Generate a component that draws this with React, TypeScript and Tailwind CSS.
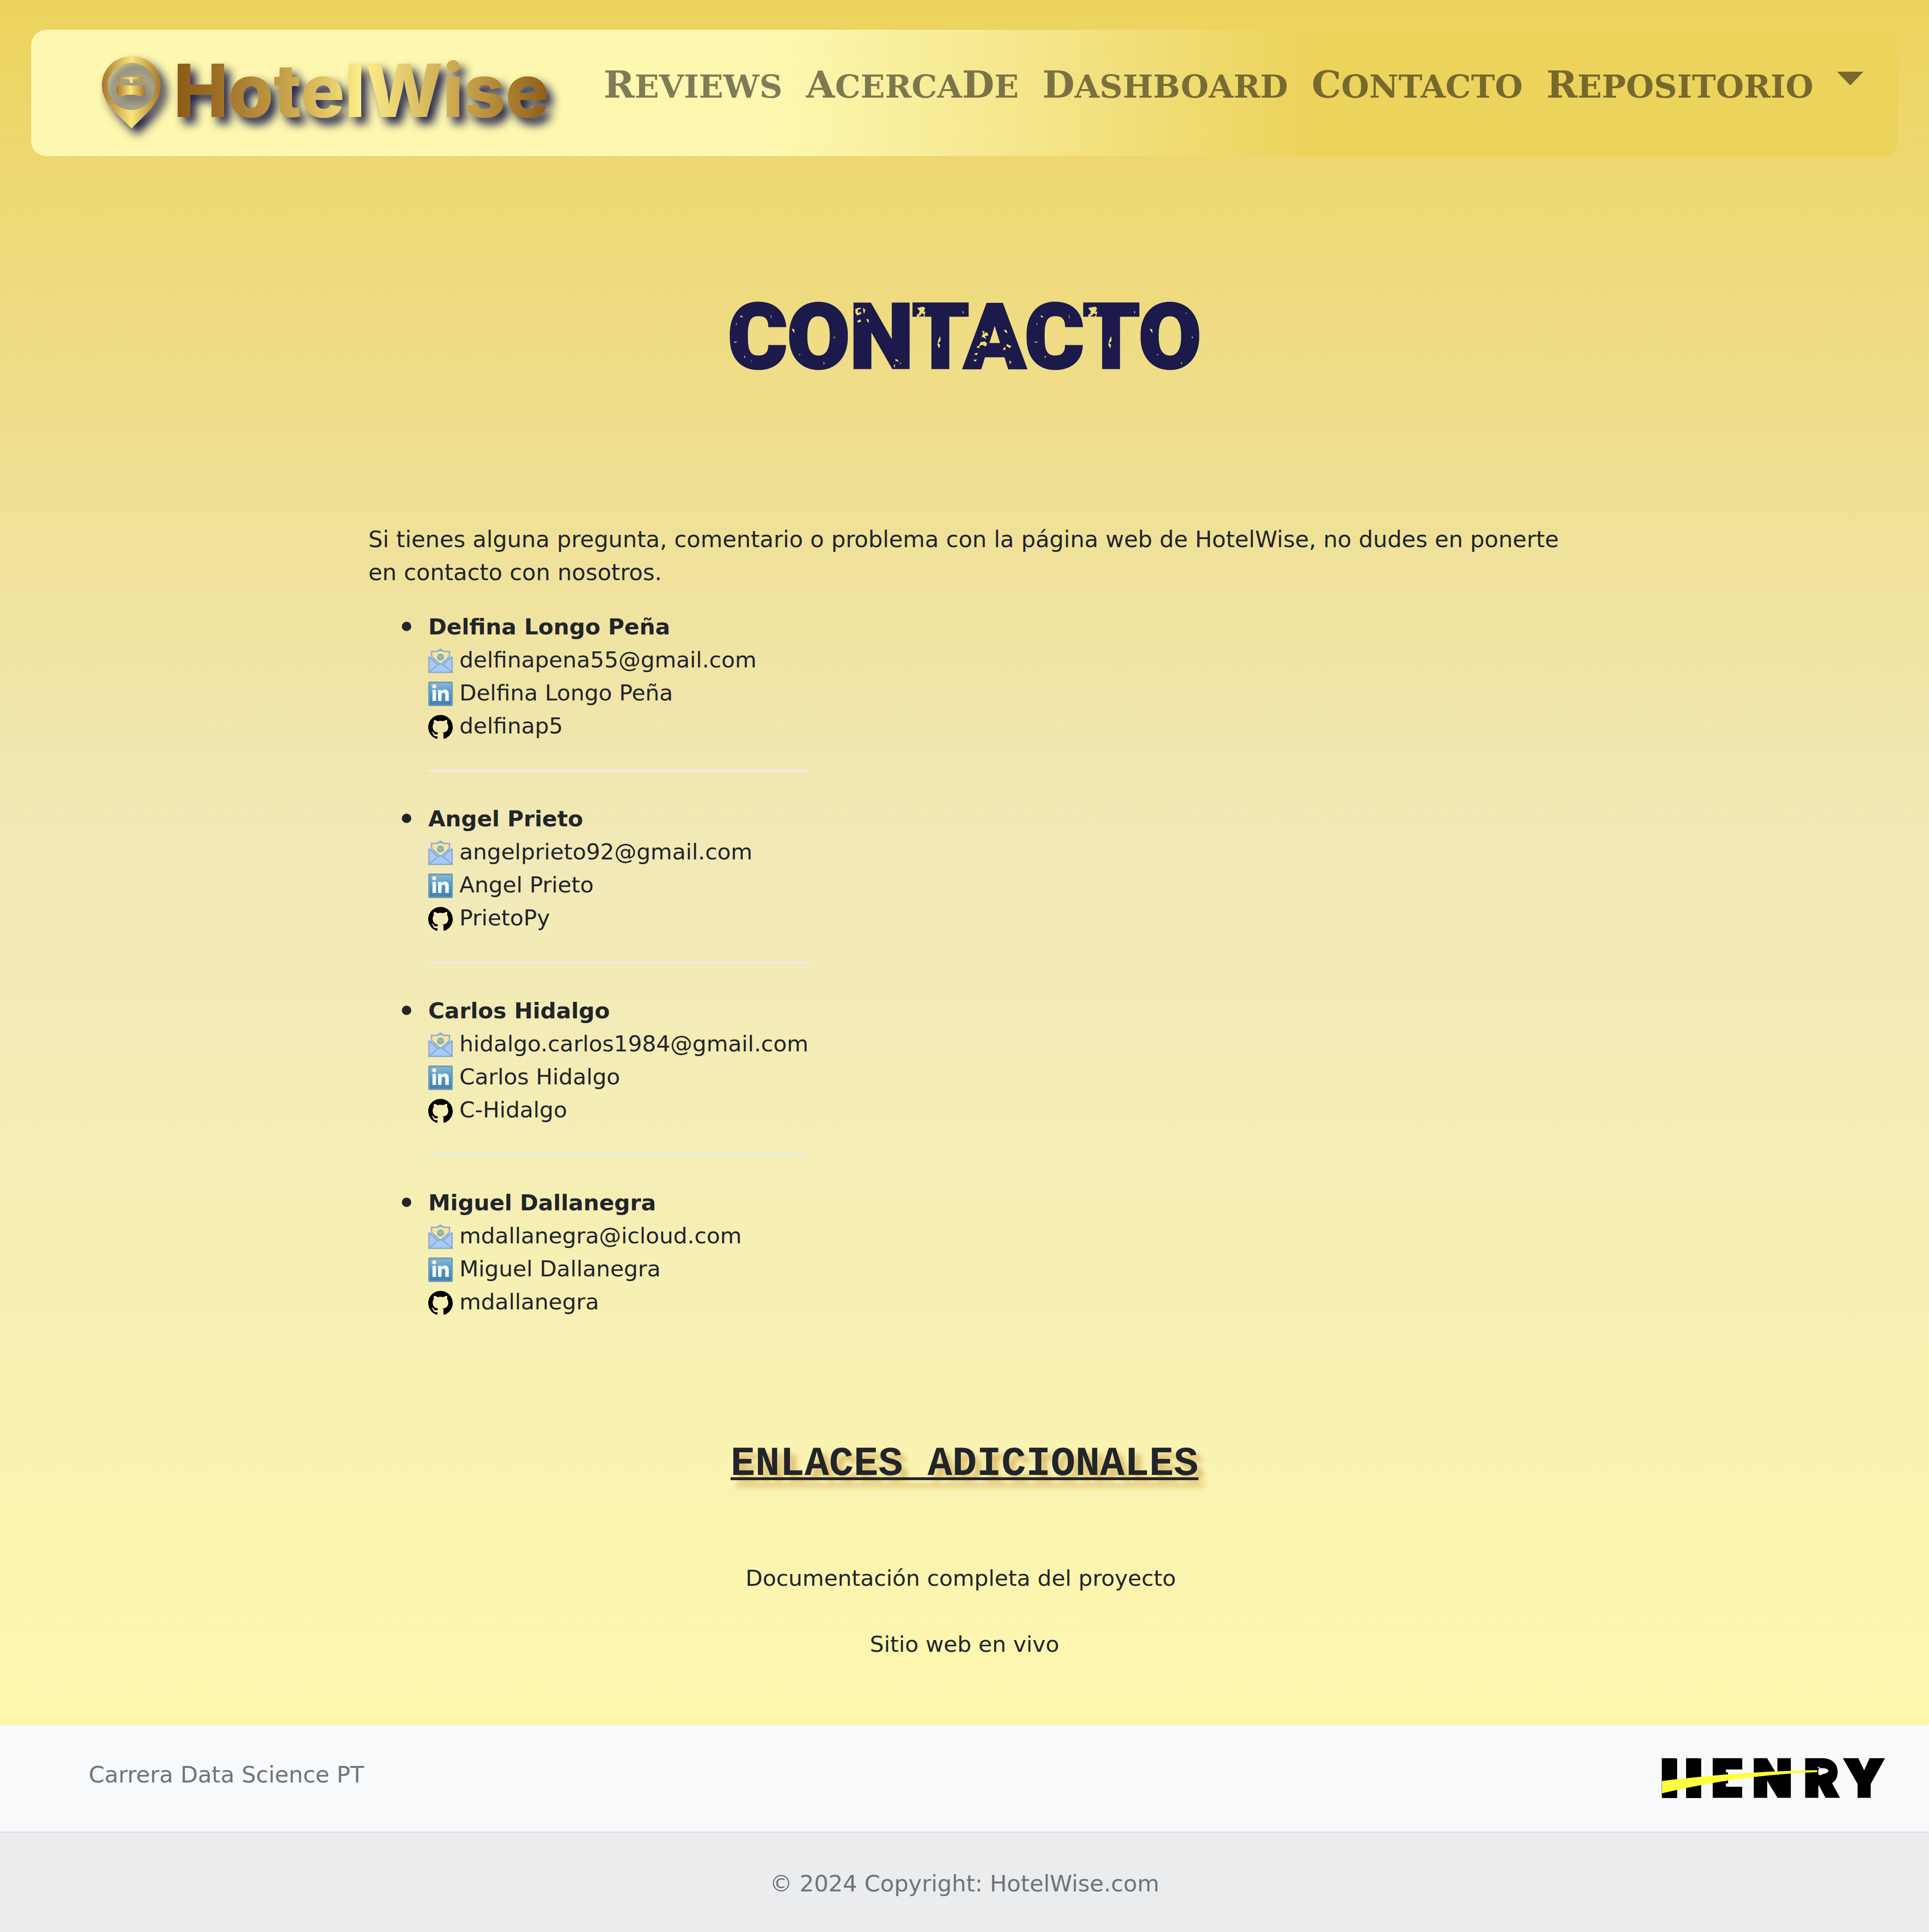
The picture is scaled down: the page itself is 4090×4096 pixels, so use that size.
import React from "react";
import { FaLinkedinIn } from "react-icons/fa6";
import { SiGithub } from "react-icons/si";

const people = [
  { name: "Delfina Longo Peña", mail: "delfinapena55@gmail.com", linkedin: "Delfina Longo Peña", github: "delfinap5" },
  { name: "Angel Prieto", mail: "angelprieto92@gmail.com", linkedin: "Angel Prieto", github: "PrietoPy" },
  { name: "Carlos Hidalgo", mail: "hidalgo.carlos1984@gmail.com", linkedin: "Carlos Hidalgo", github: "C-Hidalgo" },
  { name: "Miguel Dallanegra", mail: "mdallanegra@icloud.com", linkedin: "Miguel Dallanegra", github: "mdallanegra" },
];

const navItems = ["Reviews", "AcercaDe", "Dashboard", "Contacto", "Repositorio"];

/* Copperplate-like setting: capitals large, lowercase as tall small capitals. */
function SmallCaps({ text }: { text: string }) {
  const parts = text.match(/[A-Z]|[a-z]+/g) ?? [];
  return (
    <>
      {parts.map((part, i) =>
        /[A-Z]/.test(part) ? (
          <span key={i}>{part}</span>
        ) : (
          <span key={i} className="text-[68px] uppercase">
            {part}
          </span>
        ),
      )}
    </>
  );
}

function HotelWiseLogo() {
  return (
    <svg
      viewBox="0 0 1000 200"
      className="h-[200px] w-[1000px] shrink-0 overflow-visible drop-shadow-[12px_14px_10px_#1b1b4a]"
      role="img"
      aria-label="HotelWise"
    >
      <defs>
        <linearGradient id="ring" x1="0" x2="1">
          <stop offset="0" stopColor="#a9762b" />
          <stop offset="0.5" stopColor="#fbe67a" />
          <stop offset="1" stopColor="#a9762b" />
        </linearGradient>
        <linearGradient id="word" gradientUnits="userSpaceOnUse" x1="176" y1="0" x2="964" y2="0">
          <stop offset="0" stopColor="#8d5d15" />
          <stop offset="0.1" stopColor="#9c6c24" />
          <stop offset="0.25" stopColor="#bd9540" />
          <stop offset="0.4" stopColor="#e2c565" />
          <stop offset="0.5" stopColor="#fdf088" />
          <stop offset="0.65" stopColor="#dcc063" />
          <stop offset="0.82" stopColor="#bd9540" />
          <stop offset="1" stopColor="#8d5d15" />
        </linearGradient>
      </defs>
      <ellipse cx="79" cy="84" rx="50" ry="50" fill="#d0cb98" fillOpacity="0.5" />
      <path
        fill="url(#ring)"
        fillRule="evenodd"
        d="M79 20C43 20 16 48 16 82C16 118 50 144 79 173C108 144 141 118 141 82C141 48 115 20 79 20ZM79 34C106 34 129 56 129 84C129 112 106 134 79 134C52 134 28 112 28 84C28 56 52 34 79 34Z"
      />
      <path
        fill="url(#ring)"
        d="M53 66Q53 64 56 64H99Q102 64 102 66V77H96V71Q96 69 93 69H84Q82 69 82 71V77H75V71Q75 69 72 69H62Q59 69 59 71V77H53ZM50 82H104Q107 83 107 87V98Q107 102 103 102V105H92Q90 102 88 102H66Q64 102 62 105H51V102Q47 101 47 98V87Q47 83 50 82Z"
      />
      <text x="168" y="149" fontSize="155" fontWeight="800" fontFamily="Inter, sans-serif" fill="url(#word)">
        HotelWise
      </text>
    </svg>
  );
}

function MailIcon() {
  return (
    <svg viewBox="0 0 52 52" className="size-[52px] shrink-0" aria-hidden="true">
      <path d="M7 17V6H19L26 1L33 6H45V17L26 34Z" fill="#f0e6a4" stroke="#8fb0c4" strokeWidth="3" />
      <path d="M19 6L26 1L33 6Z" fill="#85aff0" />
      <path d="M1 18L7 15V20L26 34L45 20V15L51 18V51H1Z" fill="#a9c9f8" />
      <path d="M1.500 17V50.500H50.500V17" fill="none" stroke="#8fb0c4" strokeWidth="3" />
      <path d="M2 18L21 34L26 32L31 34L50 18M3 49L21 34M49 49L31 34" fill="none" stroke="#7ba2dc" strokeWidth="2" />
      <circle cx="26" cy="18" r="5.500" fill="#a8bb9c" stroke="#8aa9b4" strokeWidth="3.500" />
    </svg>
  );
}

function LinkedInIcon() {
  return (
    <span className="grid size-[52px] shrink-0 place-items-center rounded-[3px] border-3 border-[#6d99b3] bg-linear-to-b from-[#86b6d4] via-[#4f9ac8] to-[#457fb2]">
      <FaLinkedinIn className="size-10 text-white" aria-hidden="true" />
    </span>
  );
}

function Row({ icon, children }: { icon: React.ReactNode; children: React.ReactNode }) {
  return (
    <a href="#" className="flex h-[70px] items-center gap-[14px]">
      <span className="pt-1">{icon}</span>
      {children}
    </a>
  );
}

/* Worn-print flecks over the title letters. */
function Flecks() {
  return (
    <svg
      viewBox="0 0 1005 144"
      preserveAspectRatio="none"
      className="pointer-events-none absolute inset-x-0 top-[42px] h-[144px] w-full"
      fill="#eddb78"
      aria-hidden="true"
    >
      <path d="M28 25l5 5-7-1zM17 44l3-2-2 5zM91 24l2 4-1 5zM35 111l3 3-3 2zM14 81l7 1-7 2zM50 120l2 5-2-2zM136 54l5 1 1 8-4-4zM225 70l3 2-2 3zM203 124l3 3-2 3zM151 108l5 1-5 1z" />
      <path d="M271 12l9-3 4 2-8 3 1 7 5-3 2 4-9 4-4-6zM287 9l5 5-2 8-2-3zM275 37l7-3 1 5-7 2zM294 33l5 1 1 7-3-1zM356 118l5 2 2 4-7-2zM352 132l4-3-2 8zM365 126l4 1-3 2z" />
      <path d="M402 10l13-3 4 3-3 9 4-2-2 8-6-4-3 5-5-2 4-7zM402 23l6 1-2 5 6-2-3 8-5-2-4 3zM415 27l4-2-1 8-3-1zM498 16l3 2-1 5zM447 78l4-9 1 10-5 6 4 3-2 8-4-8z" />
      <path d="M540 58l6 2-3 5 7-4 4 7-8 2 3 6-9-5-3 5 5-12zM537 82l9-1 5 5-4 6-6-4-8 3zM529 91l5-1 1 5-6-1zM525 106l6-1-2 5-5-1zM521 120l8-1-3 5zM586 56l6 1 2 7-5-3zM592 86l10 5-3 4-7-4zM598 121l4 3-3 6zM583 98l6-6 1 7z" />
      <path d="M666 25l5 5-7-1zM655 44l3-2-2 5zM652 81l7 1-7 2zM673 111l3 3-3 2zM724 24l2 4-1 5z" />
      <path d="M765 10l15-3 4 3-3 9 4-2-2 8-6-4-3 5-5-2 2-7zM766 23l6 1-2 5 6-2-3 8-5-2-4 3zM779 27l4-2-1 8-3-1zM862 16l3 2-1 5zM810 78l4-9 1 10-5 6 4 3-2 8-4-8z" />
      <path d="M896 54l5 1 1 8-4-4zM985 70l3 2-2 3zM962 124l3 3-2 3zM911 108l5 1-5 1zM972 20l4 1-4 1z" />
    </svg>
  );
}

function HenryLogo() {
  return (
    <svg viewBox="0 0 474 84" className="h-[84px] w-[474px] overflow-visible" role="img" aria-label="Henry">
      <text
        x="-2 106 193 302 387"
        y="80"
        fontSize="106"
        fontWeight="900"
        fontFamily="Inter, sans-serif"
        stroke="#000"
        strokeWidth="7"
      >
        HENRY
      </text>
      <path d="M32 -1H51V85H32ZM140 24H178V60H140Z" fill="#f8f9fb" />
      <path d="M0 0H32V84H0ZM51 0H83V84H51Z" />
      <path d="M0 48Q165 27 329 25V29Q165 35 0 74Z" fill="#ffff3c" />
      <path d="M329 18q5-1 6 3q16-1 18 5q-2 7-15 7q0 3-4 3q2-3-1-6q-3-4 0-8q-1-3-4-4Z" fill="#fff" />
    </svg>
  );
}

export default function App() {
  return (
    <div className="flex min-h-screen flex-col bg-[#f8f9fb] font-['DejaVu_Sans',Verdana,sans-serif] text-[47px] leading-[70px] text-[#212529]">
      <div className="flex flex-1 flex-col bg-linear-to-b from-[#edd35c] via-[#f1e9b8] to-[#fdf7ae] px-[66px] pt-[63px]">
        <nav className="flex h-[268px] items-start justify-between rounded-[32px] bg-linear-to-r from-[#fdf7af] from-40% to-[#ecd35c] to-68% pr-[73px] pl-[134px]">
          <a href="#" className="pt-9">
            <HotelWiseLogo />
          </a>
          <ul className="flex items-start gap-[50px] pt-[69px] font-['DejaVu_Serif',serif] text-[79px] leading-[96px] font-bold text-black/50">
            {navItems.map((item) => (
              <li key={item}>
                <a href="#" className="whitespace-nowrap">
                  <SmallCaps text={item} />
                </a>
              </li>
            ))}
            <li>
              <button type="button" aria-label="Más opciones" className="mt-5 block">
                <svg viewBox="0 0 56 29" className="h-[29px] w-14" aria-hidden="true">
                  <path d="M0 0H56L28 29Z" fill="currentColor" />
                </svg>
              </button>
            </li>
          </ul>
        </nav>

        <h1 className="relative mx-auto mt-[270px] font-[Roboto,sans-serif] text-[192px] leading-[228px] font-black text-[#1b1a4b] [-webkit-text-stroke:5px_#1b1a4b]">
          CONTACTO
          <Flecks />
        </h1>

        <section className="mx-auto mt-[279px] w-full max-w-[2528px]">
          <p className="text-[48px]">
            Si tienes alguna pregunta, comentario o problema con la página web de HotelWise, no dudes en ponerte en
            contacto con nosotros.
          </p>
          <ul className="mt-[46px] ml-[127px] w-fit">
            {people.map((person, i) => (
              <li
                key={person.name}
                className="relative before:absolute before:top-6 before:-left-14 before:size-5 before:rounded-full before:bg-[#212529]"
              >
                <strong>{person.name}</strong>
                <Row icon={<MailIcon />}>{person.mail}</Row>
                <Row icon={<LinkedInIcon />}>{person.linkedin}</Row>
                <Row icon={<SiGithub className="size-[52px] text-black" aria-hidden="true" />}>{person.github}</Row>
                {i < people.length - 1 && <hr className="mt-[58px] mb-[65px] border-t-4 border-[#ececec]" />}
              </li>
            ))}
          </ul>
        </section>

        <h2 className="mx-auto mt-[254px] font-['Liberation_Mono',monospace] text-[87px] leading-[110px] font-bold underline decoration-[6px] underline-offset-[5px] [text-decoration-skip-ink:none] [text-shadow:12px_14px_12px_#cfa04cb0]">
          ENLACES ADICIONALES
        </h2>
        <div className="mt-[152px] mb-[136px] flex flex-col items-center gap-[70px]">
          <a href="#" className="pr-4">
            Documentación completa del proyecto
          </a>
          <a href="#">Sitio web en vivo</a>
        </div>
      </div>

      <footer className="text-[48px] text-[#6c757d]">
        <div className="flex h-[229px] items-center justify-between border-b-3 border-[#dee2e6] pr-[92px] pl-[188px]">
          <span className="pb-4">Carrera Data Science PT</span>
          <HenryLogo />
        </div>
        <div className="bg-[#ebecee] pt-[72px] pb-[68px] text-center">
          © 2024 Copyright: <a href="#">HotelWise.com</a>
        </div>
      </footer>
    </div>
  );
}
